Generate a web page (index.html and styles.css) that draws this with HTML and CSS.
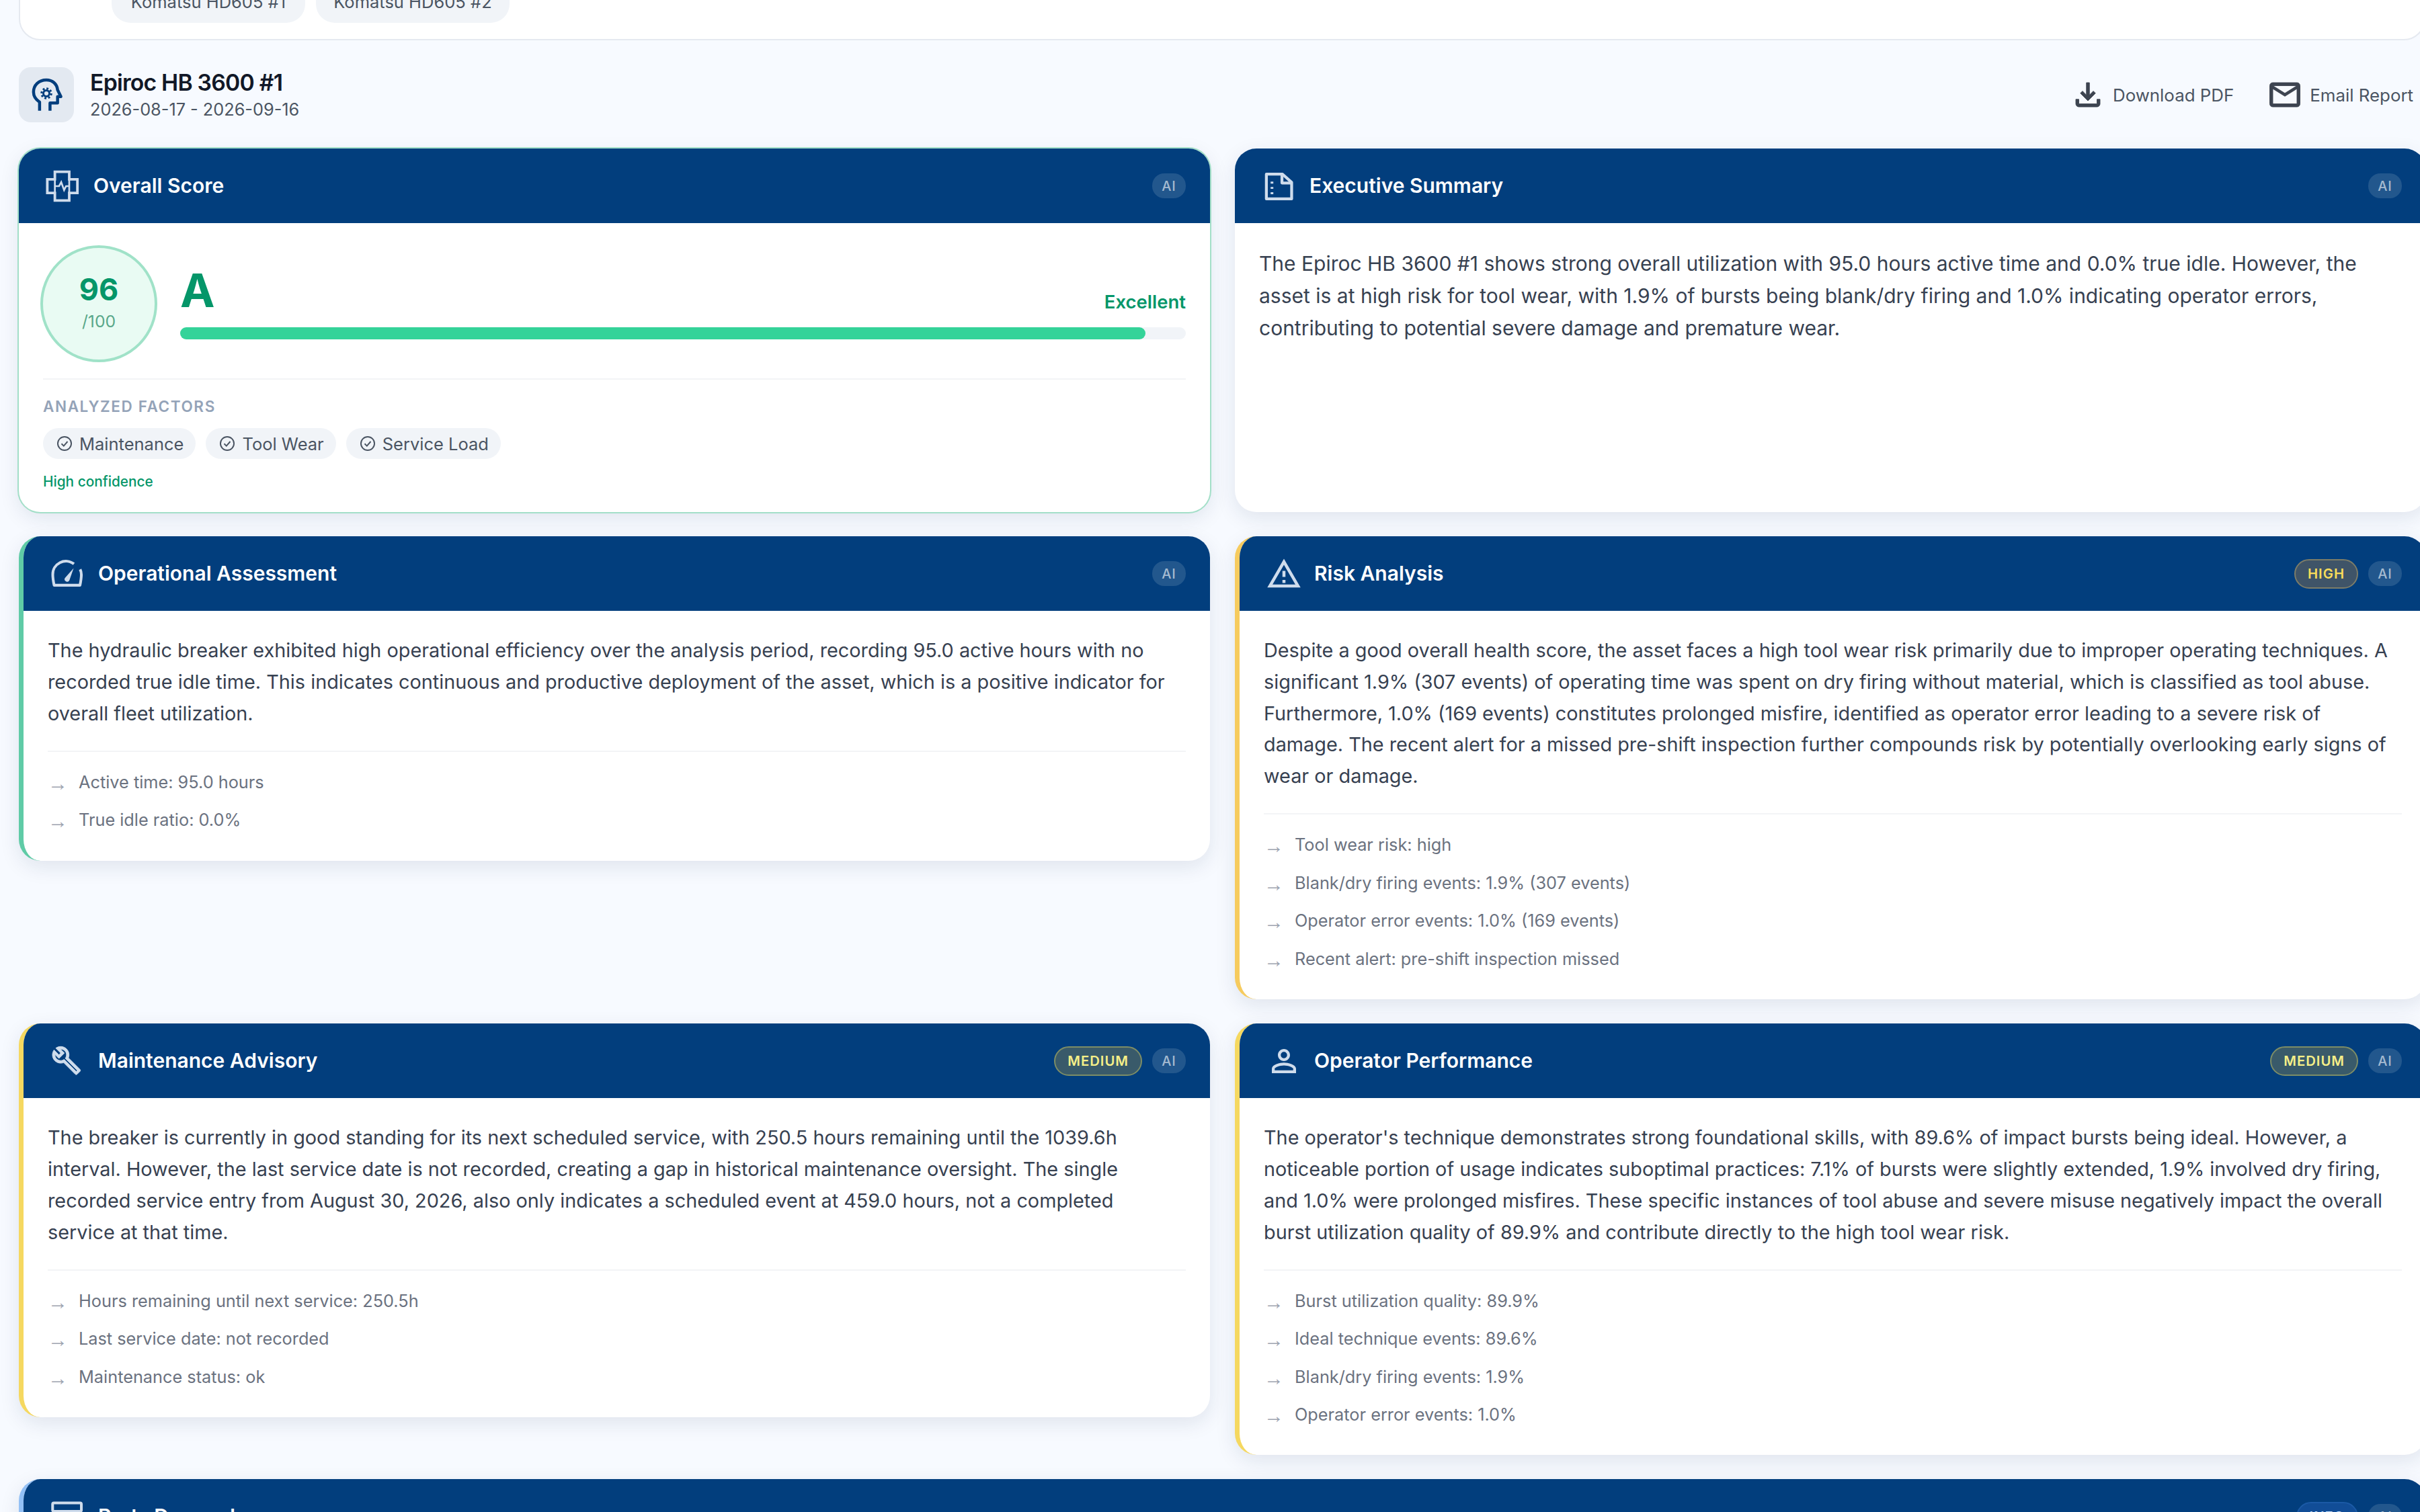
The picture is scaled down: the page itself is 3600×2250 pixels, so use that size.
FILE: index.html
```html
<!DOCTYPE html>
<html lang="en">
<head>
    <meta charset="UTF-8">
    <title>Asset Report</title>
    <link rel="stylesheet" href="styles.css">
</head>
<body>
    <div class="page">
        <!-- asset picker, scrolled mostly out of view -->
        <div class="picker">
            <span class="picker-chip">Komatsu HD605 #1</span>
            <span class="picker-chip">Komatsu HD605 #2</span>
        </div>

        <div class="report-head">
            <div class="report-id">
                <div class="report-icon">
                    <svg viewBox="0 0 24 24" fill="none" stroke="#023e7d" stroke-width="2" stroke-linejoin="round"><path d="M7.500 22.500v-5.700C4.800 15 3.500 13 3.500 10.200 3.500 5.600 7 2.200 12 2.200c4 0 7 2.600 7.400 6.600l2.200 4.400h-2.200v4.200h-5v5.100"/><circle cx="12" cy="11.100" r="3.200" stroke-width="1.400" stroke-dasharray="1.250 1.260"/><circle cx="12" cy="11.100" r="2" stroke-width="1.300"/></svg>
                </div>
                <div>
                    <div class="report-name">Epiroc HB 3600 #1</div>
                    <div class="report-dates">2026-08-17 - 2026-09-16</div>
                </div>
            </div>
            <div class="report-actions">
                <a class="action">
                    <svg viewBox="0 0 24 24" fill="#3d4450" stroke="#3d4450" stroke-width=".4"><path d="M18 15v3H6v-3H4v3c0 1.100.9 2 2 2h12c1.100 0 2-.9 2-2v-3h-2zm-1-4l-1.410-1.410L13 12.170V4h-2v8.170L8.410 9.590 7 11l5 5 5-5z"/></svg>
                    Download PDF
                </a>
                <a class="action">
                    <svg viewBox="0 0 24 24" fill="#3d4450" stroke="#3d4450" stroke-width=".4"><path d="M22 6c0-1.100-.9-2-2-2H4c-1.100 0-2 .9-2 2v12c0 1.100.9 2 2 2h16c1.100 0 2-.9 2-2V6zm-2 0l-8 5-8-5h16zm0 12H4V8l8 5 8-5v10z"/></svg>
                    Email Report
                </a>
            </div>
        </div>

        <div class="grid">
            <section class="card card-score">
                <header class="card-head">
                    <svg class="card-icon" viewBox="0 0 24 24" fill="none" stroke="#cfdcec" stroke-width="1.700"><path d="M6.500 2.500h9.500v5h5.400v9H16v5H6.500v-5H1.500v-9h5z"/><path d="M6.500 7.500v9M16 7.500v9M6.500 12h2.800l1.400-2.600 1.900 5.200 1.300-2.600H16" stroke-width="1.200"/></svg>
                    <h2 class="card-title">Overall Score</h2>
                    <span class="tag-ai">AI</span>
                </header>
                <div class="card-body score-body">
                    <div class="score-top">
                        <div class="score-ring">
                            <div class="score-num">96</div>
                            <div class="score-max">/100</div>
                        </div>
                        <div class="score-main">
                            <div class="score-row">
                                <span class="score-grade">A</span>
                                <span class="score-label">Excellent</span>
                            </div>
                            <div class="score-track"><div class="score-fill" style="width: 96%"></div></div>
                        </div>
                    </div>
                    <div class="factors">
                        <div class="factors-title">ANALYZED FACTORS</div>
                        <div class="factors-list">
                            <span class="factor"><svg viewBox="0 0 16 16" fill="none" stroke="#4b5563" stroke-width="1.300"><circle cx="8" cy="8" r="6.700"/><path d="M5 8.200l2.200 2.200L11 6"/></svg>Maintenance</span>
                            <span class="factor"><svg viewBox="0 0 16 16" fill="none" stroke="#4b5563" stroke-width="1.300"><circle cx="8" cy="8" r="6.700"/><path d="M5 8.200l2.200 2.200L11 6"/></svg>Tool Wear</span>
                            <span class="factor"><svg viewBox="0 0 16 16" fill="none" stroke="#4b5563" stroke-width="1.300"><circle cx="8" cy="8" r="6.700"/><path d="M5 8.200l2.200 2.200L11 6"/></svg>Service Load</span>
                        </div>
                        <div class="confidence">High confidence</div>
                    </div>
                </div>
            </section>

            <section class="card card-summary">
                <header class="card-head">
                    <svg class="card-icon" viewBox="0 0 24 24" fill="none" stroke="#cfdcec" stroke-width="1.900" stroke-linejoin="round"><path d="M3.500 4.100h10.700l6 5.400v10.900H3.500z"/><path d="M13.800 4.500v5.400h6"/><path d="M7.200 9v1.300M7.200 12.500v1.300M7.200 16v1.300" stroke-width="1.800"/></svg>
                    <h2 class="card-title">Executive Summary</h2>
                    <span class="tag-ai">AI</span>
                </header>
                <div class="card-body">
                    <p class="summary-text">The Epiroc HB 3600 #1 shows strong overall utilization with 95.0 hours active time and 0.0% true idle. However, the asset is at high risk for tool wear, with 1.9% of bursts being blank/dry firing and 1.0% indicating operator errors, contributing to potential severe damage and premature wear.</p>
                </div>
            </section>

            <section class="card card-good">
                <header class="card-head">
                    <svg class="card-icon" viewBox="0 0 24 24" fill="none" stroke="#cfdcec" stroke-width="1.800" stroke-linejoin="round"><path d="M16 5.400A8.700 8.700 0 0 0 2 12.500c0 2.500.4 4.500.9 7h17.100c.5-2.500.9-4.500.9-7 0-1.300-.3-2.500-.8-3.500"/><path d="M10 14.800l5.800-6.600-2.800 8a1.600 1.600 0 0 1-3-1.400z" fill="#cfdcec" stroke="none"/></svg>
                    <h2 class="card-title">Operational Assessment</h2>
                    <span class="tag-ai">AI</span>
                </header>
                <div class="card-body">
                    <p class="card-text">The hydraulic breaker exhibited high operational efficiency over the analysis period, recording 95.0 active hours with no recorded true idle time. This indicates continuous and productive deployment of the asset, which is a positive indicator for overall fleet utilization.</p>
                    <ul class="points">
                        <li>Active time: 95.0 hours</li>
                        <li>True idle ratio: 0.0%</li>
                    </ul>
                </div>
            </section>

            <section class="card card-high">
                <header class="card-head">
                    <svg class="card-icon" viewBox="0 0 24 24" fill="#cfdcec"><path d="M12 5.990L19.530 19H4.470L12 5.990M12 2L1 21h22L12 2zm1 14h-2v2h2v-2zm0-6h-2v4h2v-4z"/></svg>
                    <h2 class="card-title">Risk Analysis</h2>
                    <span class="tag-level tag-high">HIGH</span>
                    <span class="tag-ai">AI</span>
                </header>
                <div class="card-body">
                    <p class="card-text">Despite a good overall health score, the asset faces a high tool wear risk primarily due to improper operating techniques. A significant 1.9% (307 events) of operating time was spent on dry firing without material, which is classified as tool abuse. Furthermore, 1.0% (169 events) constitutes prolonged misfire, identified as operator error leading to a severe risk of damage. The recent alert for a missed pre-shift inspection further compounds risk by potentially overlooking early signs of wear or damage.</p>
                    <ul class="points">
                        <li>Tool wear risk: high</li>
                        <li>Blank/dry firing events: 1.9% (307 events)</li>
                        <li>Operator error events: 1.0% (169 events)</li>
                        <li>Recent alert: pre-shift inspection missed</li>
                    </ul>
                </div>
            </section>

            <section class="card card-medium">
                <header class="card-head">
                    <svg class="card-icon" viewBox="-1.100 -1.800 28.400 28.400" fill="#cfdcec" stroke="#cfdcec" stroke-width=".5"><path d="M22.610 18.990l-9.080-9.080c.93-2.340.45-5.100-1.440-7C9.790.61 6.210.4 3.660 2.250L7.500 6.110 6.080 7.520 2.250 3.690C.39 6.230.61 9.820 2.910 12.110c1.860 1.860 4.570 2.350 6.890 1.480l9.110 9.110c.39.39 1.020.39 1.410 0l2.300-2.300c.4-.38.4-1.010-.01-1.410zm-3 1.600l-9.460-9.460c-.61.45-1.290.72-2 .82-1.360.2-2.790-.21-3.830-1.250C3.370 9.760 2.930 8.500 3 7.260l3.090 3.090 4.240-4.240-3.090-3.090c1.240-.07 2.490.37 3.440 1.310 1.080 1.080 1.490 2.570 1.240 3.960-.12.71-.42 1.370-.88 1.960l9.450 9.450-.88.89z"/></svg>
                    <h2 class="card-title">Maintenance Advisory</h2>
                    <span class="tag-level tag-medium">MEDIUM</span>
                    <span class="tag-ai">AI</span>
                </header>
                <div class="card-body">
                    <p class="card-text">The breaker is currently in good standing for its next scheduled service, with 250.5 hours remaining until the 1039.6h interval. However, the last service date is not recorded, creating a gap in historical maintenance oversight. The single recorded service entry from August 30, 2026, also only indicates a scheduled event at 459.0 hours, not a completed service at that time.</p>
                    <ul class="points">
                        <li>Hours remaining until next service: 250.5h</li>
                        <li>Last service date: not recorded</li>
                        <li>Maintenance status: ok</li>
                    </ul>
                </div>
            </section>

            <section class="card card-medium">
                <header class="card-head">
                    <svg class="card-icon" viewBox="0 0 24 24" fill="#cfdcec"><path d="M12 5.900c1.160 0 2.100.94 2.100 2.100s-.94 2.100-2.100 2.100S9.900 9.160 9.900 8s.94-2.100 2.100-2.100m0 9c2.970 0 6.100 1.460 6.100 2.100v1.100H5.900V17c0-.64 3.130-2.100 6.100-2.100M12 4C9.790 4 8 5.790 8 8s1.790 4 4 4 4-1.790 4-4-1.790-4-4-4zm0 9c-2.670 0-8 1.340-8 4v3h16v-3c0-2.660-5.330-4-8-4z"/></svg>
                    <h2 class="card-title">Operator Performance</h2>
                    <span class="tag-level tag-medium">MEDIUM</span>
                    <span class="tag-ai">AI</span>
                </header>
                <div class="card-body">
                    <p class="card-text">The operator's technique demonstrates strong foundational skills, with 89.6% of impact bursts being ideal. However, a noticeable portion of usage indicates suboptimal practices: 7.1% of bursts were slightly extended, 1.9% involved dry firing, and 1.0% were prolonged misfires. These specific instances of tool abuse and severe misuse negatively impact the overall burst utilization quality of 89.9% and contribute directly to the high tool wear risk.</p>
                    <ul class="points">
                        <li>Burst utilization quality: 89.9%</li>
                        <li>Ideal technique events: 89.6%</li>
                        <li>Blank/dry firing events: 1.9%</li>
                        <li>Operator error events: 1.0%</li>
                    </ul>
                </div>
            </section>

            <section class="card card-info card-wide">
                <header class="card-head">
                    <svg class="card-icon" viewBox="0 0 24 24" fill="none" stroke="#cfdcec" stroke-width="1.800"><rect x="1.900" y="2.900" width="19" height="5.500" rx=".8"/><path d="M3 8.400V21h16.800V8.400"/></svg>
                    <h2 class="card-title">Parts Demand</h2>
                    <span class="tag-level tag-info">INFO</span>
                    <span class="tag-ai">AI</span>
                </header>
            </section>
        </div>
    </div>
</body>
</html>
```

FILE: styles.css
```css
* { box-sizing: border-box; }

html, body {
    margin: 0;
    height: 2250px;
    overflow: hidden;
}

body {
    font-family: Inter, "Liberation Sans", sans-serif;
    background-color: #f7faff;
    color: #374151;
}

.page {
    width: 3580px;
    margin-left: 28px;
}

/* asset picker */
.picker {
    height: 92px;
    margin-top: -32px;
    padding-left: 136px;
    display: flex;
    gap: 16px;
    background: #fff;
    border: 2px solid #e5e9f0;
    border-radius: 0 0 32px 32px;
}
.picker-chip {
    width: 288px;
    height: 64px;
    display: flex;
    align-items: center;
    justify-content: center;
    border-radius: 28px;
    background-color: #f1f4f8;
    color: #4b5563;
    font-size: 25.5px;
}

/* report header */
.report-head {
    display: flex;
    align-items: center;
    justify-content: space-between;
    padding: 40px 0 39px;
}
.report-id {
    display: flex;
    align-items: center;
    gap: 24px;
}
.report-icon {
    width: 82px;
    height: 82px;
    display: flex;
    align-items: center;
    justify-content: center;
    border-radius: 18px;
    background-color: #e3e9f1;
}
.report-icon svg { width: 54px; height: 54px; }
.report-name {
    font-size: 33.75px;
    font-weight: 600;
    letter-spacing: -0.8px;
    color: #111827;
    line-height: 44px;
}
.report-dates {
    font-size: 25.31px;
    color: #4b5563;
    line-height: 36px;
}
.report-actions {
    display: flex;
    gap: 49px;
    padding-right: 18px;
}
.action {
    display: flex;
    align-items: center;
    gap: 10px;
    font-size: 25.875px;
    color: #4b5563;
}
.action svg { width: 54px; height: 54px; }

/* cards */
.grid {
    display: grid;
    grid-template-columns: 1772px 1772px;
    gap: 36px 37px;
    align-items: start;
}
.card {
    background: #fff;
    border-radius: 32px;
    overflow: hidden;
    box-shadow: 0 9px 30px rgba(15, 40, 80, 0.1);
}
.card-good { border-left: 7px solid #5fcba6; }
.card-high { border-left: 7px solid #f6cb5e; }
.card-medium { border-left: 7px solid #f5d860; }
.card-info { border-left: 7px solid #93c0f5; }
.card-wide { grid-column: 1 / 3; }
.card-score {
    min-height: 541px;
    box-shadow: 0 0 0 2px #a3dfc8, 0 9px 30px rgba(15, 40, 80, 0.1);
}
.card-summary { min-height: 541px; }

.card-head {
    height: 111px;
    display: flex;
    align-items: center;
    padding: 0 36px;
    background-color: #023e7d;
}
.card-icon {
    width: 54px;
    height: 54px;
    flex-shrink: 0;
    margin: 0 18px 0 3px;
}
.card-title {
    flex: 1;
    margin: 0;
    padding-bottom: 2px;
    font-size: 30px;
    font-weight: 600;
    color: #fff;
}
.tag-ai {
    width: 50px;
    height: 37px;
    display: flex;
    align-items: center;
    justify-content: center;
    border-radius: 18px;
    background-color: rgba(255, 255, 255, 0.13);
    color: rgba(255, 255, 255, 0.6);
    font-size: 20px;
    font-weight: 500;
    letter-spacing: 1px;
}
.tag-level {
    height: 44px;
    display: flex;
    align-items: center;
    margin-right: 15px;
    padding: 0 18px;
    border-radius: 22px;
    border-width: 2px;
    border-style: solid;
    font-size: 20.25px;
    font-weight: 600;
    letter-spacing: 1px;
}
.tag-medium {
    background-color: #395a6a;
    border-color: #7d8d66;
    color: #f5ef88;
}
.tag-high {
    background-color: #3f5468;
    border-color: #7c7c68;
    color: #f8dc5a;
}
.tag-info {
    background-color: #114d97;
    border-color: #1b5aa6;
    color: #bfdbfe;
}

.card-body { padding: 36px 36px 32px; }
.card-text {
    margin: 0;
    font-size: 28.84px;
    line-height: 46.8px;
    color: #374151;
}
.summary-text {
    margin: 0;
    font-size: 30px;
    line-height: 48.2px;
    color: #374151;
}

.points {
    list-style: none;
    margin: 31.5px 0 0;
    padding: 17px 0 0;
    border-top: 2px solid #f3f4f6;
}
.points li {
    position: relative;
    padding-left: 46px;
    font-size: 25.31px;
    line-height: 56.4px;
    color: #6b7280;
}
.points li::before {
    content: "\2192";
    position: absolute;
    left: 0;
    top: 2px;
    font-family: "Liberation Sans", sans-serif;
    font-size: 30px;
    color: #9ca3af;
}

/* score card */
.score-body { padding: 33px 36px 31px; }
.score-top {
    display: flex;
    align-items: center;
    gap: 34px;
    padding-bottom: 24px;
    border-bottom: 2px solid #f3f4f6;
}
.score-ring {
    width: 174px;
    height: 174px;
    margin-left: -4px;
    padding-bottom: 6px;
    display: flex;
    flex-direction: column;
    align-items: center;
    justify-content: center;
    flex-shrink: 0;
    border: 4.5px solid #a0e2c8;
    border-radius: 50%;
    background-color: #e9fbf3;
}
.score-num {
    font-size: 45px;
    font-weight: 700;
    line-height: 58px;
    color: #059669;
}
.score-max {
    font-size: 24.75px;
    line-height: 36px;
    color: #5aa88a;
}
.score-main {
    flex: 1;
    padding-bottom: 9px;
}
.score-row {
    display: flex;
    align-items: flex-end;
    justify-content: space-between;
}
.score-grade {
    font-size: 69px;
    font-weight: 700;
    line-height: 84px;
    color: #059669;
}
.score-label {
    font-size: 27.5px;
    font-weight: 600;
    line-height: 50px;
    color: #059669;
}
.score-track {
    height: 18px;
    margin-top: 13px;
    border-radius: 9px;
    background-color: #f1f4f8;
}
.score-fill {
    height: 100%;
    border-radius: 9px;
    background-color: #34d399;
}
.factors { padding-top: 24px; }
.factors-title {
    font-size: 22.5px;
    font-weight: 600;
    line-height: 32px;
    letter-spacing: 1.6px;
    color: #94a3b8;
}
.factors-list {
    display: flex;
    gap: 15px;
    margin-top: 16px;
}
.factor {
    height: 46px;
    display: flex;
    align-items: center;
    gap: 10px;
    padding: 0 18px 0 20px;
    border-radius: 23px;
    background-color: #f1f4f8;
    font-size: 25.5px;
    color: #4b5563;
}
.factor svg { width: 24px; height: 24px; }
.confidence {
    margin-top: 20px;
    font-size: 20.8px;
    line-height: 28px;
    font-weight: 500;
    color: #059669;
}
```
